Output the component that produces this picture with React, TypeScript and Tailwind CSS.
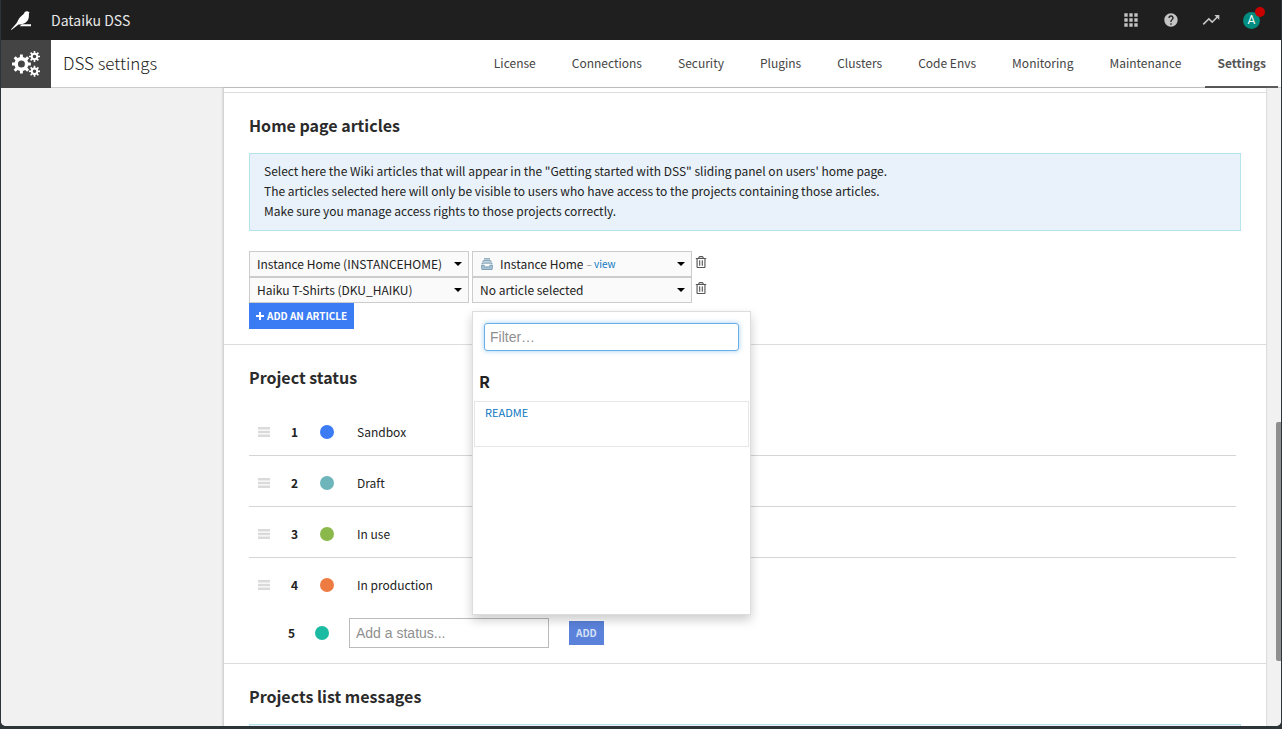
import { FaRegTrashAlt } from 'react-icons/fa';
import { MdApps, MdHelp, MdTrendingUp } from 'react-icons/md';

const tabs = [
  'License',
  'Connections',
  'Security',
  'Plugins',
  'Clusters',
  'Code Envs',
  'Monitoring',
  'Maintenance',
  'Settings',
];

const statuses = [
  { name: 'Sandbox', dot: 'bg-[#3b7bf3]' },
  { name: 'Draft', dot: 'bg-[#6db5ba]' },
  { name: 'In use', dot: 'bg-[#8bb84a]' },
  { name: 'In production', dot: 'bg-[#ee7c42]' },
];

function BirdLogo() {
  return (
    <svg viewBox="0 0 20 20" className="size-5" fill="#fff" aria-hidden="true">
      <path d="M18.600 2.500L17.800 2C17.300 1.200 16.500 1 15.600 1.200C14.300 1.400 13.500 2.200 13.100 3.300C12.800 4.200 12.100 4.700 11.200 5.300C9.200 6.700 7.900 8.600 7 10.600C6.500 11.800 5.900 12.800 5.100 13.800L0 19.600L.4 19.900L7.500 14.600C12 14.400 15.800 12.700 17.300 9.200C18.100 7.300 17.900 5.300 17.900 3.200Z" />
      <path d="M10.800 14.300h9.200v2H8.800z" />
    </svg>
  );
}

/** Outline of a gear with square teeth, followed by its round hole. */
function gearPath(cx: number, cy: number, outer: number, root: number, hole: number, teeth: number) {
  const step = (Math.PI * 2) / teeth;
  const point = (radius: number, angle: number) =>
    `${(cx + radius * Math.cos(angle)).toFixed(2)} ${(cy + radius * Math.sin(angle)).toFixed(2)}`;
  const outline = Array.from({ length: teeth }, (_, i) => {
    const a = i * step;
    return [
      point(root, a - step * 0.27),
      point(outer, a - step * 0.19),
      point(outer, a + step * 0.19),
      point(root, a + step * 0.27),
    ].join('L');
  }).join('L');
  return `M${outline}ZM${cx - hole} ${cy}a${hole} ${hole} 0 1 0 ${hole * 2} 0a${hole} ${hole} 0 1 0 ${-hole * 2} 0Z`;
}

function Cogs() {
  return (
    <svg viewBox="0 0 28 28" className="size-7" fill="#fff" fillRule="evenodd" aria-hidden="true">
      <path d={gearPath(9.4, 14, 9.6, 7.1, 3.5, 8)} />
      <path d={gearPath(22.5, 6.5, 5.6, 3.9, 1.8, 8)} />
      <path d={gearPath(22.5, 21.3, 5.6, 3.9, 1.8, 8)} />
    </svg>
  );
}

function StackIcon() {
  return (
    <svg viewBox="0 0 12 12" className="size-3 shrink-0" fill="none" stroke="#56839f" aria-hidden="true">
      <path d="M3 .9h6M1.900 3.900V3.400q0-.6.6-.6h7q.6 0 .6.6v.5M1.100 6.200V5.600q0-.6.6-.6h8.600q.6 0 .6.6v.6" />
      <path d="M.5 7.200h2.700v1.700h5.600V7.200h2.700l-.4 4.300H.9z" fill="#a9c3d3" stroke="#7ea1b7" />
    </svg>
  );
}

function Caret() {
  return (
    <svg viewBox="0 0 8 4" className="h-1 w-2" fill="#000" aria-hidden="true">
      <path d="M0 0h8L4 4z" />
    </svg>
  );
}

function Grip() {
  return (
    <svg viewBox="0 0 12 10" className="h-2.5 w-3" fill="#dadada" aria-hidden="true">
      <path d="M0 0h12v2.500H0zM0 3.750h12v2.500H0zM0 7.500h12V10H0z" />
    </svg>
  );
}

function Select({ label, value }: { label: string; value: string }) {
  return (
    <div className="relative w-[220px]">
      <select
        aria-label={label}
        className="block h-[26px] w-full appearance-none border border-[#ccc] bg-[#fafafa] pr-6 pl-[7px] text-[12px] leading-5 text-[#222]"
      >
        <option>{value}</option>
      </select>
      <span className="pointer-events-none absolute inset-y-0 right-[7px] flex items-center">
        <Caret />
      </span>
    </div>
  );
}

function TrashButton() {
  return (
    <button type="button" aria-label="Remove article" className="flex items-center pb-1 text-[#555]">
      <FaRegTrashAlt className="size-3" />
    </button>
  );
}

function ArticlePopover() {
  return (
    <div className="absolute top-[34px] left-0 z-10 h-[304px] w-[279px] border border-[#ddd] bg-white px-px shadow-[0_5px_10px_rgba(0,0,0,0.2)]">
      <div className="px-2.5 pt-[11px]">
        <input
          type="text"
          autoFocus
          aria-label="Filter articles"
          placeholder="Filter…"
          className="block h-7 w-full rounded-[3px] border border-[#66afe9] px-[5px] font-['Liberation_Sans',sans-serif] text-[14px] shadow-[0_0_5px_rgba(102,175,233,0.6)] outline-none placeholder:text-[#8f8f8f]"
        />
      </div>
      <h4 className="mt-[18px] px-[5px] text-[16px] leading-6 font-bold">R</h4>
      <div className="mt-2 h-[46px] border border-[#e6e6e6] px-2.5">
        <a href="#readme" className="text-[11px] text-[#0b77c2]">
          README
        </a>
      </div>
    </div>
  );
}

function SectionTitle({ children }: { children: string }) {
  return <h2 className="mb-4 text-[16px] leading-6 font-bold text-[#2b2b2b]">{children}</h2>;
}

export default function App() {
  return (
    <div className="h-screen bg-[#2d3438] px-px pb-[3px] font-['Noto_Sans_CJK_JP','Noto_Sans',sans-serif] text-[12px] leading-5 text-[#222]">
      <div className="relative flex h-full flex-col overflow-hidden rounded-b-[5px] bg-white">
        <header className="flex h-10 shrink-0 items-center bg-[#1f1f1f] pr-[21px] pl-2.5 text-[#e8e8e8]">
          <BirdLogo />
          <span className="ml-5 text-[14px]">Dataiku DSS</span>
          <div className="ml-auto flex items-center gap-[22px] text-[#c4c4c4]">
            <button type="button" aria-label="Applications">
              <MdApps className="size-5" />
            </button>
            <button type="button" aria-label="Help">
              <MdHelp className="size-4" />
            </button>
            <button type="button" aria-label="Activity">
              <MdTrendingUp className="size-5" />
            </button>
            <button
              type="button"
              aria-label="Account"
              className="relative flex size-[17px] items-center justify-center rounded-full bg-[#008c7e] font-['Roboto',sans-serif] text-[12px] text-white"
            >
              A
              <span className="absolute -top-[5px] -right-[5px] size-2.5 rounded-full bg-[#c80000]" />
            </button>
          </div>
        </header>

        <div className="flex h-12 shrink-0 border-b border-[#ccc]">
          <div className="-mb-px flex w-[50px] items-center justify-center bg-[#444]">
            <Cogs />
          </div>
          <h1 className="flex items-center pb-0.5 pl-3 text-[17px] font-light">DSS settings</h1>
          <nav className="-mb-px ml-auto flex gap-3 pr-[3px] text-[12px] text-[#444]">
            {tabs.map((tab) => (
              <a
                key={tab}
                href={`#${tab}`}
                className={
                  tab === 'Settings'
                    ? 'flex items-center border-b-2 border-[#5c5c5f] px-3 font-bold text-[#555]'
                    : 'flex items-center border-b-2 border-transparent px-3'
                }
              >
                {tab}
              </a>
            ))}
          </nav>
        </div>

        <div className="flex min-h-0 flex-1 bg-[#f1f1f1] pr-[15px]">
          <aside className="w-[222px] shrink-0" />
          <main className="min-w-0 flex-1 overflow-hidden border-l border-[#d5d5d5] bg-white pt-1 shadow-[0_0_2px_rgba(0,0,0,0.25)]">
            <section className="border-t border-[#ddd] px-[25px] pt-5 pb-[15px]">
              <SectionTitle>Home page articles</SectionTitle>
              <div className="border border-[#b5e3ea] bg-[#e9f2fa] px-[14px] pt-[7px] pb-[9px]">
                <p>
                  Select here the Wiki articles that will appear in the "Getting started with DSS" sliding panel on
                  users' home page.
                </p>
                <p>
                  The articles selected here will only be visible to users who have access to the projects containing
                  those articles.
                </p>
                <p>Make sure you manage access rights to those projects correctly.</p>
              </div>
              <div className="mt-5">
                <div className="flex gap-[3px]">
                  <Select label="Project" value="Instance Home (INSTANCEHOME)" />
                  <div className="flex h-[26px] w-[220px] items-center border border-[#ccc] bg-[#fafafa] pr-1.5 pl-2">
                    <StackIcon />
                    <select aria-label="Article" className="ml-[7px] appearance-none [field-sizing:content]">
                      <option>Instance Home</option>
                    </select>
                    <span className="ml-[3px] text-[10px] text-[#888]">
                      –{' '}
                      <a href="#article" className="text-[#0b77c2]">
                        view
                      </a>
                    </span>
                    <span className="ml-auto">
                      <Caret />
                    </span>
                  </div>
                  <TrashButton />
                </div>
                <div className="flex gap-[3px]">
                  <Select label="Project" value="Haiku T-Shirts (DKU_HAIKU)" />
                  <div className="relative">
                    <Select label="Article" value="No article selected" />
                    <ArticlePopover />
                  </div>
                  <TrashButton />
                </div>
              </div>
              <button
                type="button"
                className="flex h-[26px] items-center gap-[3px] bg-[#3b7bf3] px-[7px] text-[10px] font-bold text-white"
              >
                <svg viewBox="0 0 8 8" className="size-2" fill="#fff" aria-hidden="true">
                  <path d="M3 0h2v3h3v2H5v3H3V5H0V3h3z" />
                </svg>
                ADD AN ARTICLE
              </button>
            </section>

            <section className="border-t border-[#ddd] px-[25px] pt-5 pb-[15px]">
              <SectionTitle>Project status</SectionTitle>
              <ul className="mr-[5px]">
                {statuses.map((status, index) => (
                  <li
                    key={status.name}
                    className="flex items-center border-b border-[#d5d5d5] pt-[17px] pb-[13px] pl-[9px] last:border-transparent"
                  >
                    <Grip />
                    <span className="ml-5 w-[9px] text-center font-bold">{index + 1}</span>
                    <span className={`ml-[21px] size-[14px] rounded-full ${status.dot}`} />
                    <span className="ml-[23px]">{status.name}</span>
                  </li>
                ))}
              </ul>
              <form className="mt-[9px] flex items-center pl-[38px]">
                <span className="w-[9px] text-center font-bold">5</span>
                <span className="ml-[19px] size-[14px] rounded-full bg-[#1abba2]" />
                <input
                  type="text"
                  aria-label="Add a status"
                  placeholder="Add a status..."
                  className="ml-5 h-[30px] w-[200px] border border-[#bbb] px-1.5 font-['Liberation_Sans',sans-serif] text-[14px] placeholder:text-[#8f8f8f]"
                />
                <button type="button" className="ml-5 h-6 bg-[#5a82da] px-[7px] text-[10px] font-bold text-[#d6e0f6]">
                  ADD
                </button>
              </form>
            </section>

            <section className="border-t border-[#ddd] px-[25px] pt-5">
              <SectionTitle>Projects list messages</SectionTitle>
              <div className="h-20 border border-[#b5e3ea] bg-[#e9f2fa]" />
            </section>
          </main>
        </div>
        <div className="absolute right-0 bottom-[65px] h-[239px] w-[5px] rounded-l-[2px] bg-[#8f8f8f]" />
      </div>
    </div>
  );
}
